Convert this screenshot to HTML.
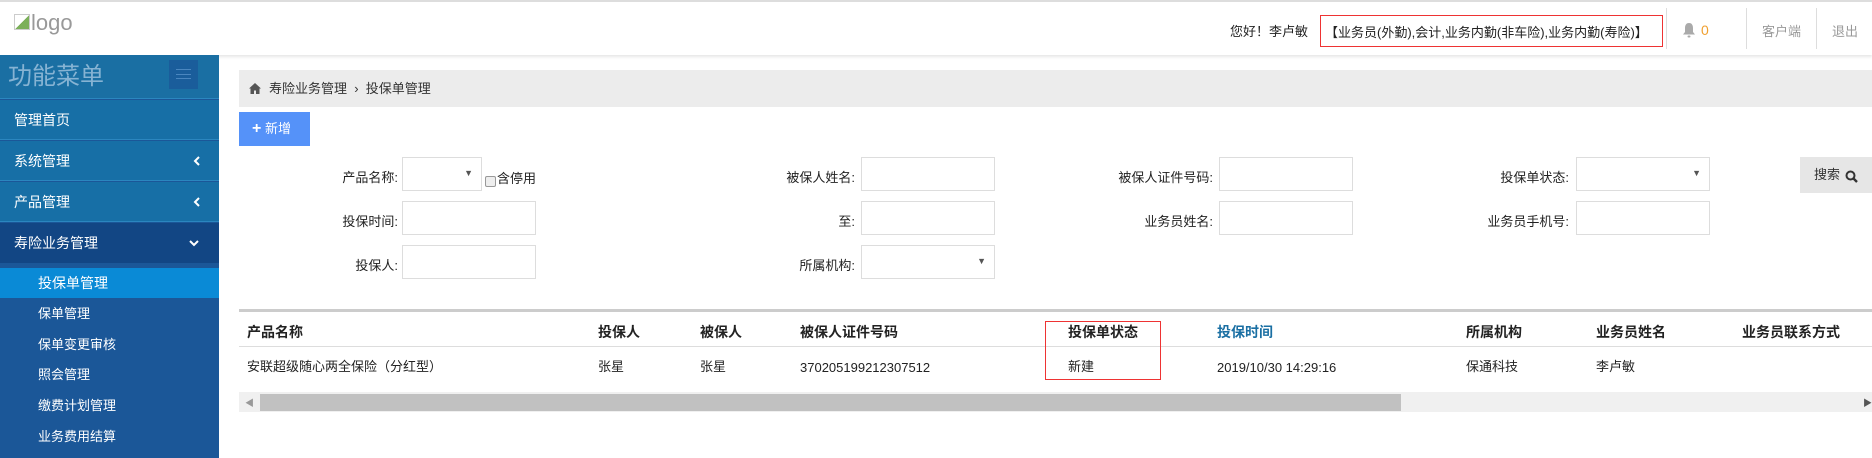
<!DOCTYPE html>
<html><head><meta charset="utf-8"><style>
*{margin:0;padding:0;box-sizing:border-box}
body{width:1872px;height:458px;overflow:hidden;background:#fff;font-family:"Liberation Sans","Noto Sans CJK SC",sans-serif;font-size:13px;color:#222;position:relative}
.a{position:absolute}
.hdr{left:0;top:0;width:1872px;height:55px;border-top:2px solid #ddd;box-shadow:0 2px 3px #e6e6e6;background:#fff}
.side{left:0;top:55px;width:219px;height:403px;background:#1b5798}
.si{position:absolute;left:0;width:219px;color:#fff;font-size:14px;padding-left:14px}
.inp{position:absolute;border:1px solid #ddd;background:#fff;height:34px}
.lb{position:absolute;text-align:right;font-size:13px;color:#222}
.th{position:absolute;top:323px;font-weight:bold;font-size:14px;line-height:18px}
.td{position:absolute;top:358px;font-size:13px;line-height:18px}
.caret{position:absolute;right:8px;top:10px;font-size:9px;color:#555}
</style></head><body>
<div class="a hdr">
 <div class="a" style="left:14px;top:12px;width:16px;height:16px;border:1px solid #ccc;background:linear-gradient(135deg,#fff 50%,#7cb05a 50%)"></div>
 <div class="a" style="left:31px;top:8px;font-size:22px;color:#999">logo</div>
 <div class="a" style="left:1230px;top:19px;font-size:13px">您好！李卢敏</div>
 <div class="a" style="left:1320px;top:13px;width:343px;height:32px;border:1px solid #e33;padding:6px 0 0 4px;font-size:13px;white-space:nowrap">【业务员(外勤),会计,业务内勤(非车险),业务内勤(寿险)】</div>
 <div class="a" style="left:1666px;top:6px;width:1px;height:41px;background:#ddd"></div>
 <svg class="a" style="left:1682px;top:20px" width="14" height="16" viewBox="0 0 14 16"><path d="M7 1C4 1 3 3.5 3 6v4l-2 2.5h12L11 10V6c0-2.5-1-5-4-5z" fill="#aaa"/><rect x="5.5" y="13.5" width="3" height="2" rx="1" fill="#aaa"/></svg>
 <div class="a" style="left:1701px;top:20px;color:#f0a030;font-size:14px">0</div>
 <div class="a" style="left:1746px;top:6px;width:1px;height:41px;background:#ddd"></div>
 <div class="a" style="left:1762px;top:19px;color:#999">客户端</div>
 <div class="a" style="left:1816px;top:6px;width:1px;height:41px;background:#ddd"></div>
 <div class="a" style="left:1832px;top:19px;color:#999">退出</div>
</div>
<div class="a side">
 <div class="si" style="top:0;height:44px;background:#1a6fa3;border-bottom:1px solid #2b86bf;font-size:24px;color:#86b3d3;padding-left:8px;line-height:44px">功能菜单
  <div class="a" style="left:169px;top:5px;width:29px;height:29px;background:#1a5d9b"><div style="margin:9px 7px;height:10px;border-top:1px solid #4a86bf;border-bottom:1px solid #4a86bf;position:relative"><div style="position:absolute;top:4px;left:0;right:0;border-top:1px solid #4a86bf"></div></div></div></div>
 <div class="si" style="top:45px;height:40px;line-height:40px;background:#176fa6;border-bottom:1px solid #2b86bf">管理首页</div>
 <div class="si" style="top:86px;height:40px;line-height:40px;background:#176fa6;border-bottom:1px solid #2b86bf">系统管理<svg class="a" style="left:193px;top:15px" width="8" height="10" viewBox="0 0 8 10"><path d="M6 1L2 5l4 4" stroke="#fff" stroke-width="2" fill="none"/></svg></div>
 <div class="si" style="top:127px;height:40px;line-height:40px;background:#176fa6;border-bottom:1px solid #2b86bf">产品管理<svg class="a" style="left:193px;top:15px" width="8" height="10" viewBox="0 0 8 10"><path d="M6 1L2 5l4 4" stroke="#fff" stroke-width="2" fill="none"/></svg></div>
 <div class="si" style="top:168px;height:40px;line-height:40px;background:#124684">寿险业务管理<svg class="a" style="left:189px;top:16px" width="10" height="8" viewBox="0 0 10 8"><path d="M1 2l4 4 4-4" stroke="#fff" stroke-width="2" fill="none"/></svg></div>
 <div class="si" style="top:213px;height:30px;line-height:30px;background:#0a8ad6;padding-left:38px">投保单管理</div>
 <div class="si" style="top:246px;height:26px;line-height:26px;padding-left:38px;font-size:13px">保单管理</div>
 <div class="si" style="top:277px;height:26px;line-height:26px;padding-left:38px;font-size:13px">保单变更审核</div>
 <div class="si" style="top:307px;height:26px;line-height:26px;padding-left:38px;font-size:13px">照会管理</div>
 <div class="si" style="top:338px;height:26px;line-height:26px;padding-left:38px;font-size:13px">缴费计划管理</div>
 <div class="si" style="top:369px;height:26px;line-height:26px;padding-left:38px;font-size:13px">业务费用结算</div>
</div>
<div class="a" style="left:239px;top:70px;width:1633px;height:37px;background:#ececec;line-height:37px;padding-left:30px;color:#333">寿险业务管理 &nbsp;›&nbsp; 投保单管理</div>
<svg class="a" style="left:249px;top:83px" width="12" height="11" viewBox="0 0 12 11"><path d="M6 0L0 5.5h1.5V11h3.5V7.5h2V11h3.5V5.5H12z" fill="#555"/></svg>
<div class="a" style="left:239px;top:112px;width:71px;height:34px;background:#5592f9;color:#fff;line-height:34px;padding-left:13px;font-size:13px"><b style="font-size:16px">+</b> 新增</div>

<div class="lb" style="left:300px;top:167px;width:98px">产品名称:</div>
<div class="inp" style="left:402px;top:157px;width:80px"><span class="caret">▼</span></div>
<div class="a" style="left:485px;top:176px;width:11px;height:11px;border:1px solid #999;border-radius:2px;background:#eee"></div>
<div class="a" style="left:497px;top:168px">含停用</div>
<div class="lb" style="left:300px;top:211px;width:98px">投保时间:</div>
<div class="inp" style="left:402px;top:201px;width:134px"></div>
<div class="lb" style="left:300px;top:255px;width:98px">投保人:</div>
<div class="inp" style="left:402px;top:245px;width:134px"></div>

<div class="lb" style="left:700px;top:167px;width:155px">被保人姓名:</div>
<div class="inp" style="left:861px;top:157px;width:134px"></div>
<div class="lb" style="left:700px;top:211px;width:155px">至:</div>
<div class="inp" style="left:861px;top:201px;width:134px"></div>
<div class="lb" style="left:700px;top:255px;width:155px">所属机构:</div>
<div class="inp" style="left:861px;top:245px;width:134px"><span class="caret">▼</span></div>

<div class="lb" style="left:1050px;top:167px;width:163px">被保人证件号码:</div>
<div class="inp" style="left:1219px;top:157px;width:134px"></div>
<div class="lb" style="left:1050px;top:211px;width:163px">业务员姓名:</div>
<div class="inp" style="left:1219px;top:201px;width:134px"></div>

<div class="lb" style="left:1400px;top:167px;width:169px">投保单状态:</div>
<div class="inp" style="left:1576px;top:157px;width:134px"><span class="caret">▼</span></div>
<div class="lb" style="left:1400px;top:211px;width:169px">业务员手机号:</div>
<div class="inp" style="left:1576px;top:201px;width:134px"></div>
<div class="a" style="left:1800px;top:157px;width:72px;height:36px;background:#e6e6e6;line-height:36px;padding-left:14px;color:#333">搜索</div>
<svg class="a" style="left:1845px;top:170px" width="13" height="13" viewBox="0 0 13 13"><circle cx="5.5" cy="5.5" r="4" stroke="#333" stroke-width="2" fill="none"/><path d="M8.5 8.5L12 12" stroke="#333" stroke-width="2.4"/></svg>

<div class="a" style="left:239px;top:309px;width:1633px;height:3px;background:#ccc"></div>
<div class="a" style="left:239px;top:346px;width:1633px;height:1px;background:#ddd"></div>
<div class="th" style="left:247px">产品名称</div>
<div class="th" style="left:598px">投保人</div>
<div class="th" style="left:700px">被保人</div>
<div class="th" style="left:800px">被保人证件号码</div>
<div class="th" style="left:1068px">投保单状态</div>
<div class="th" style="left:1217px;color:#1a6fa3">投保时间</div>
<div class="th" style="left:1466px">所属机构</div>
<div class="th" style="left:1596px">业务员姓名</div>
<div class="th" style="left:1742px">业务员联系方式</div>
<div class="td" style="left:247px">安联超级随心两全保险（分红型）</div>
<div class="td" style="left:598px">张星</div>
<div class="td" style="left:700px">张星</div>
<div class="td" style="left:800px;top:359px">370205199212307512</div>
<div class="td" style="left:1068px">新建</div>
<div class="td" style="left:1217px;top:359px">2019/10/30 14:29:16</div>
<div class="td" style="left:1466px">保通科技</div>
<div class="td" style="left:1596px">李卢敏</div>
<div class="a" style="left:1045px;top:321px;width:116px;height:59px;border:1px solid #e33"></div>
<div class="a" style="left:239px;top:392px;width:1633px;height:20px;background:#f0f0f0"></div>
<div class="a" style="left:260px;top:394px;width:1141px;height:17px;background:#c1c1c1"></div>
<div class="a" style="left:245px;top:396px;font-size:9px;color:#999">◀</div>
<div class="a" style="left:1863px;top:396px;font-size:9px;color:#555">▶</div>
</body></html>
